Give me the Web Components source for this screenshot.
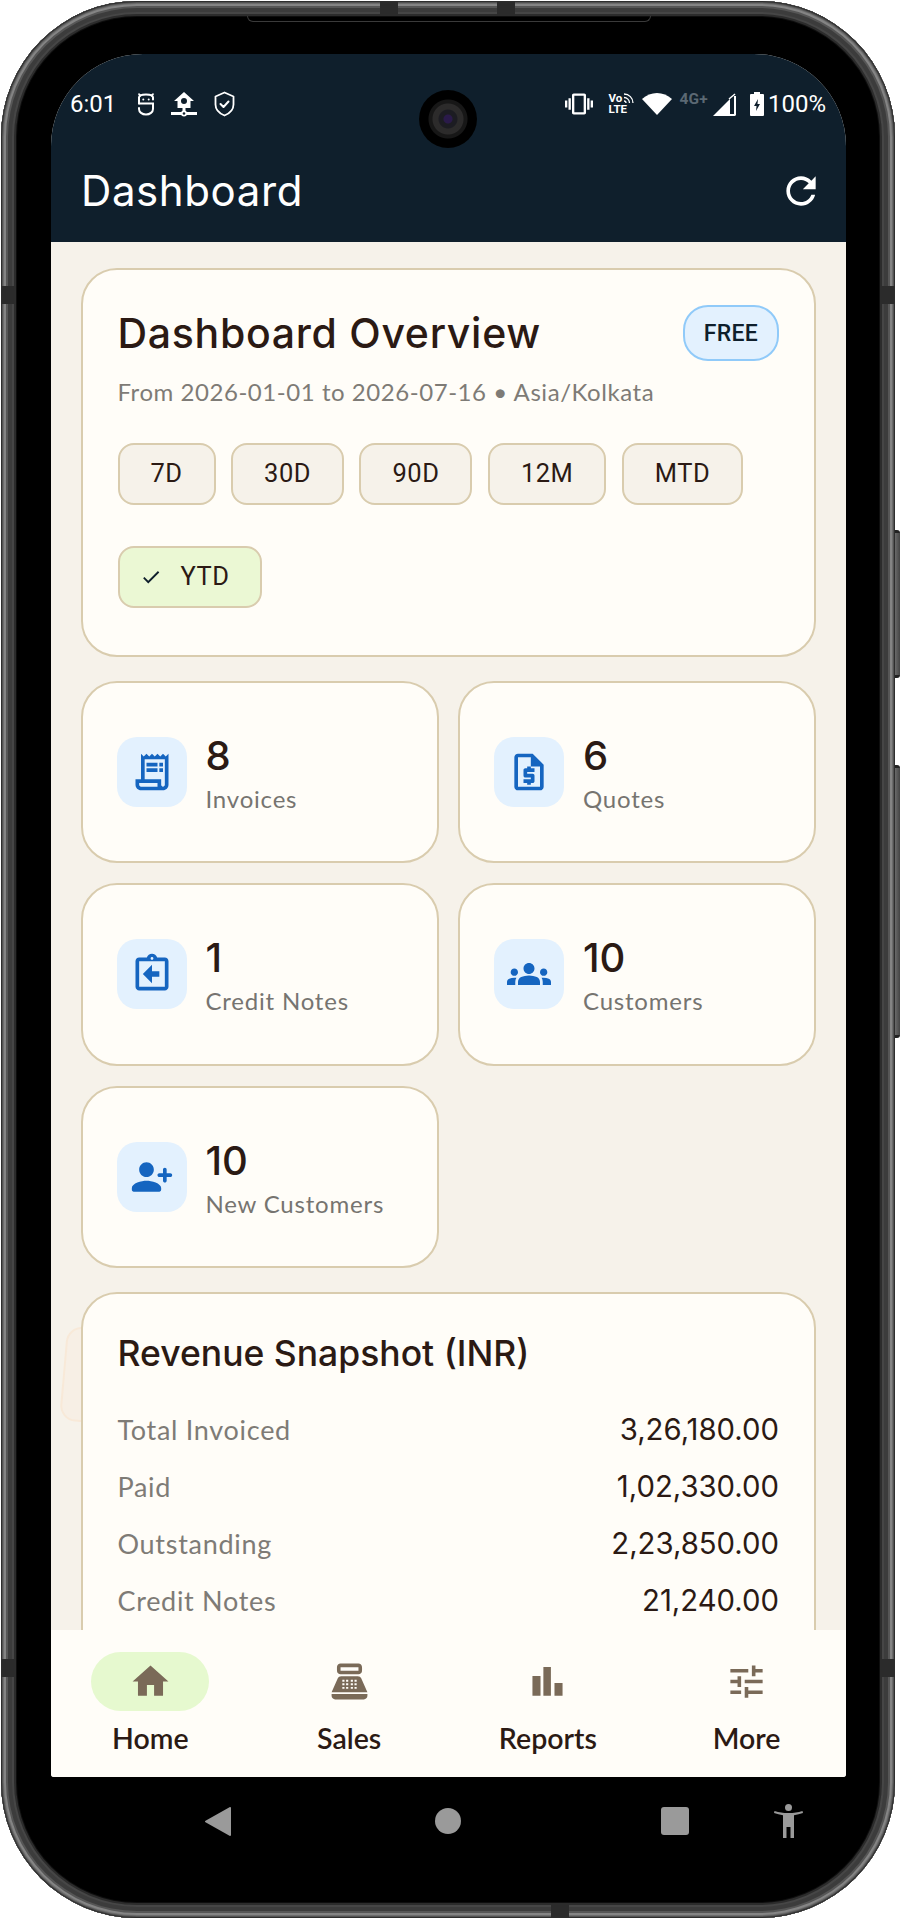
<!DOCTYPE html>
<html lang="en"><head><meta charset="utf-8"><title>Dashboard</title>
<style>html,body{margin:0;padding:0;background:#fff}</style></head>
<body>
<phone-frame>
  <app-screen>
    <app-header slot="header"></app-header>
    <overview-card></overview-card>
    <stat-grid>
      <stat-card icon="invoice" value="8" label="Invoices"></stat-card>
      <stat-card icon="quote" value="6" label="Quotes"></stat-card>
      <stat-card icon="credit" value="1" label="Credit Notes"></stat-card>
      <stat-card icon="groups" value="10" label="Customers"></stat-card>
      <stat-card icon="add" value="10" label="New Customers"></stat-card>
    </stat-grid>
    <revenue-card>
      <revenue-row label="Total Invoiced" value="3,26,180.00"></revenue-row>
      <revenue-row label="Paid" value="1,02,330.00"></revenue-row>
      <revenue-row label="Outstanding" value="2,23,850.00"></revenue-row>
      <revenue-row label="Credit Notes" value="21,240.00"></revenue-row>
    </revenue-card>
    <bottom-nav slot="nav">
      <tab-item icon="home" label="Home" active></tab-item>
      <tab-item icon="sales" label="Sales"></tab-item>
      <tab-item icon="reports" label="Reports"></tab-item>
      <tab-item icon="more" label="More"></tab-item>
    </bottom-nav>
  </app-screen>
  <nav-keys></nav-keys>
</phone-frame>
<script>
const HEAD='Inter,"DejaVu Sans",sans-serif', BODY='Lato,"Open Sans",sans-serif', UI='Roboto,"Noto Sans",sans-serif';
const ICONS={
 invoice:'<path d="M19.5 3.5L18 2l-1.5 1.5L15 2l-1.5 1.5L12 2l-1.5 1.5L9 2 7.5 3.5 6 2v14H3v3c0 1.66 1.34 3 3 3h12c1.66 0 3-1.34 3-3V2l-1.5 1.5zM15 20H6c-.55 0-1-.45-1-1v-1h10v2zm4-1c0 .55-.45 1-1 1s-1-.45-1-1v-3H8V5h11v14z"/><path d="M9 7h6v2H9zm7 0h2v2h-2zm-7 3h6v2H9zm7 0h2v2h-2z"/>',
 quote:'<path d="M14 2H6C4.9 2 4.01 2.9 4.01 4L4 20c0 1.1.89 2 1.99 2H18c1.1 0 2-.9 2-2V8L14 2zM6 20V4h7v5h5v11H6z"/><path d="M11 19h2v-1h1c.55 0 1-.45 1-1v-3c0-.55-.45-1-1-1h-3v-1h4v-2h-2V9h-2v1h-1c-.55 0-1 .45-1 1v3c0 .55.45 1 1 1h3v1H9v2h2v1z"/>',
 credit:'<path d="M19 3h-4.18C14.4 1.84 13.3 1 12 1s-2.4.84-2.82 2H5c-1.1 0-2 .9-2 2v14c0 1.1.9 2 2 2h14c1.1 0 2-.9 2-2V5c0-1.1-.9-2-2-2zm-7-.25c.41 0 .75.34.75.75s-.34.75-.75.75-.75-.34-.75-.75.34-.75.75-.75zM19 19H5V5h14v14z"/><path d="M16 10.5h-4V7l-5 5 5 5v-3.5h4z"/>',
 groups:'<path d="M12 12.75c1.63 0 3.07.39 4.24.9 1.08.48 1.76 1.56 1.76 2.73V18H6v-1.61c0-1.18.68-2.26 1.76-2.73 1.17-.52 2.61-.91 4.24-.91zM4 13c1.1 0 2-.9 2-2s-.9-2-2-2-2 .9-2 2 .9 2 2 2zm1.13 1.1c-.37-.06-.74-.1-1.13-.1-.99 0-1.93.21-2.78.58C.48 14.9 0 15.62 0 16.43V18h4.5v-1.61c0-.83.23-1.61.63-2.29zM20 13c1.1 0 2-.9 2-2s-.9-2-2-2-2 .9-2 2 .9 2 2 2zm4 3.43c0-.81-.48-1.53-1.22-1.85-.85-.37-1.79-.58-2.78-.58-.39 0-.76.04-1.13.1.4.68.63 1.46.63 2.29V18H24v-1.57zM12 6c1.66 0 3 1.34 3 3s-1.34 3-3 3-3-1.34-3-3 1.34-3 3-3z"/>',
 add:'<g transform="translate(24 0) scale(-1 1)"><path d="M15 12c2.21 0 4-1.79 4-4s-1.79-4-4-4-4 1.79-4 4 1.79 4 4 4zm-9-2V8c0-.55-.45-1-1-1s-1 .45-1 1v2H2c-.55 0-1 .45-1 1s.45 1 1 1h2v2c0 .55.45 1 1 1s1-.45 1-1v-2h2c.55 0 1-.45 1-1s-.45-1-1-1H6zm9 4c-2.67 0-8 1.34-8 4v1c0 .55.45 1 1 1h14c.55 0 1-.45 1-1v-1c0-2.66-5.33-4-8-4z"/></g>',
 home:'<path d="M10 20v-6h4v6h5v-8h3L12 3 2 12h3v8z"/>',
 sales:'<path fill-rule="evenodd" d="M17 2H7C5.9 2 5 2.9 5 4v2c0 1.1.9 2 2 2h10c1.1 0 2-.9 2-2V4c0-1.1-.9-2-2-2zm0 4H7V4h10v2zM20 22H4c-1.1 0-2-.9-2-2v-1h20v1c0 1.1-.9 2-2 2zM18.53 10.19C18.21 9.47 17.49 9 16.7 9H7.3c-.79 0-1.51.47-1.83 1.19L2 18h20l-3.47-7.81z"/><g fill="#fffdf8"><path d="M8 11h1.2v1.1H8zm2.1 0h1.2v1.1h-1.2zm2.6 0h1.2v1.1h-1.2zm2.1 0H16v1.1h-1.2zM8 13h1.2v1.1H8zm2.1 0h1.2v1.1h-1.2zm2.6 0h1.2v1.1h-1.2zm2.1 0H16v1.1h-1.2zM8 15h1.2v1.1H8zm2.1 0h1.2v1.1h-1.2zm2.6 0h1.2v1.1h-1.2zm2.1 0H16v1.1h-1.2z"/></g>',
 reports:'<path d="M3.6 8.9h4.5V20H3.6zM9.7 3.9h4.2V20H9.7zM15.9 12.8h4.5V20h-4.5z"/>',
 more:'<path d="M3 17v2h6v-2H3zM3 5v2h10V5H3zm10 16v-2h8v-2h-8v-2h-2v6h2zM7 9v2H3v2h4v2h2V9H7zm14 4v-2H11v2h10zm-6-4h2V7h4V5h-4V3h-2v6z"/>',
 refresh:'<path d="M17.65 6.35C16.2 4.9 14.21 4 12 4c-4.42 0-7.99 3.58-7.99 8s3.57 8 7.99 8c3.73 0 6.84-2.55 7.73-6h-2.08c-.82 2.33-3.04 4-5.65 4-3.31 0-6-2.69-6-6s2.69-6 6-6c1.66 0 3.14.69 4.22 1.78L13 11h7V4l-2.35 2.35z"/>',
 check:'<path d="M9 16.17L4.83 12l-1.41 1.41L9 19 21 7l-1.41-1.41z"/>'
};
function svg(name,size,color){return `<svg xmlns="http://www.w3.org/2000/svg" width="${size}" height="${size}" viewBox="0 0 24 24" fill="${color}" style="display:block;flex:none">${ICONS[name]}</svg>`}
class El extends HTMLElement{
  constructor(){super();this.attachShadow({mode:'open'})}
  connectedCallback(){this.shadowRoot.innerHTML=this.render()}
  a(n){return this.getAttribute(n)||''}
}
const def=(n,r)=>customElements.define(n,class extends El{render(){return r.call(this)}});

def('phone-frame',function(){return `<style>
:host{display:flex;flex-direction:column;box-sizing:border-box;position:relative;width:894px;height:1917px;margin:1px 0 0 1px;padding:53px 49px 0 50px;background:#000;border-radius:136px;
 box-shadow:inset 0 0 0 1px #2e2e2e,inset 0 0 0 2px #525252,inset 0 0 0 3px #6c6c6c,inset 0 0 0 5px #848484,inset 0 0 0 7px #565656,inset 0 0 0 11px #3c3c3c,inset 0 0 0 13px #464646,inset 0 0 0 15px #2c2c2c,inset 0 0 0 16px #0e0e0e}
.btn{position:absolute;left:894px;width:5px;background:linear-gradient(90deg,#6a6a6a,#444);border-radius:0 3px 3px 0;border-top:3px solid #222;border-bottom:3px solid #222;box-sizing:border-box}
.mark{position:absolute;background:#2b2b2b}
.speaker{position:absolute;left:246px;top:15px;width:404px;height:6px;box-sizing:border-box;border:1px solid #3a3a3a;border-top:0;border-radius:0 0 7px 7px}
</style>
<span class="mark" style="left:379px;top:0;width:18px;height:15px"></span>
<span class="mark" style="left:496px;top:0;width:18px;height:15px"></span>
<span class="mark" style="left:550px;bottom:0;width:18px;height:15px"></span>
<span class="mark" style="left:0;top:285px;width:15px;height:18px"></span>
<span class="mark" style="left:0;top:1658px;width:15px;height:18px"></span>
<span class="mark" style="right:0;top:285px;width:15px;height:18px"></span>
<span class="mark" style="right:0;top:1658px;width:15px;height:18px"></span>
<span class="speaker"></span>
<span class="btn" style="top:529px;height:148px"></span>
<span class="btn" style="top:764px;height:273px"></span>
<slot></slot>`});

def('app-screen',function(){return `<style>
:host{display:flex;flex-direction:column;position:relative;width:795px;height:1723px;flex:none;overflow:hidden;border-radius:92px 92px 3px 3px;background:#f6f2ea}
.scroll{flex:1;min-height:0;overflow:hidden;position:relative;display:flex;flex-direction:column;gap:23.5px;padding:26px 30px 0 29.5px}
.ghost{position:absolute;left:12px;top:1086px;width:60px;height:95px;box-sizing:border-box;border:2px solid #f8e9d8;background:#f7efe5;border-radius:16px;transform:rotate(5deg)}
.cam{position:absolute;left:368px;top:36px;width:58px;height:58px;border-radius:50%;background:radial-gradient(circle at 50% 50%,#2a1a4a 0 4px,#1c1c22 5px 9px,#2c2b2b 10px 15px,#171717 16px 19px,#000 20px)}
</style>
<slot name="header"></slot>
<div class="scroll"><div class="ghost"></div><slot></slot></div>
<slot name="nav"></slot>
<div class="cam"></div>`});

def('app-header',function(){return `<style>
:host{display:block;flex:none;height:188px;box-sizing:border-box;background:#0f1f2c;color:#fff;padding-top:36px}
.st{display:flex;align-items:center;justify-content:space-between;height:28px;padding:0 20px 0 19px;font:400 24px/28px ${UI}}
.g{display:flex;align-items:center}
svg{display:block;flex:none}
.volte{display:flex;flex-direction:column;font:700 11.5px/11px ${UI};position:relative;width:26px;height:22px;margin-left:15px}
.four{font:700 15.5px/14px ${UI};color:#5b6873;margin:-11px 0 0 7px;letter-spacing:.2px}
.bar{display:flex;align-items:center;justify-content:space-between;height:90px;margin-top:28px;padding:0 7px 0 30px}
h1{margin:0;font:400 42px/44px ${HEAD};letter-spacing:.6px}
</style>
<div class="st">
 <div class="g"><span>6:01</span>
  <svg style="margin-left:21px" width="18" height="24" viewBox="0 0 18 24" fill="none" stroke="#fff" stroke-width="2" stroke-linecap="round"><path d="M2 11.5V5.5C2 3.5 4.5 2.5 9 2.5s7 1 7 3v2"/><path d="M2 11.5h14v5.500c0 3-3 5.500-7 5.500s-7-2.500-7-5.500v-1"/><path d="M2 2.200l1.500 1.500M16 2.200l-1.500 1.500" stroke-width="1.800"/><circle cx="6.300" cy="7.500" r="1" fill="#fff" stroke="none"/><circle cx="11.700" cy="7.500" r="1" fill="#fff" stroke="none"/></svg>
  <svg style="margin-left:15px" width="28" height="26" viewBox="0 0 28 26" fill="#fff"><path fill-rule="evenodd" d="M14 1L24 10h-3.500v7h-13v-7H4zM14 7a3 3 0 1 0 0 6 3 3 0 0 0 0-6z"/><path d="M12.500 17h3v3h-3z"/><rect x="1" y="21" width="26" height="3"/><circle cx="14" cy="22.500" r="3"/><circle cx="14" cy="22.500" r="1.300" fill="#0f1f2c"/></svg>
  <svg style="margin-left:16px" width="21" height="26" viewBox="0 0 21 26" fill="none" stroke="#fff" stroke-width="1.800"><path d="M10.500 1.500L19.500 5.500v8c0 5-4 9-9 11-5-2-9-6-9-11v-8z" stroke-linejoin="round"/><path d="M6.500 13l3 3 5-5.500" stroke-width="2" stroke-linecap="round" stroke-linejoin="round"/></svg>
 </div>
 <div class="g">
  <svg width="28" height="28" viewBox="0 0 24 24" fill="#fff"><path d="M0 15h2V9H0v6zm3 2h2V7H3v10zm19-8v6h2V9h-2zm-3 8h2V7h-2v10zM16.500 3h-9C6.670 3 6 3.670 6 4.500v15c0 .83.67 1.500 1.500 1.500h9c.83 0 1.500-.67 1.500-1.500v-15c0-.83-.67-1.500-1.500-1.500zM16 19H8V5h8v14z"/></svg>
  <div class="volte"><span>Vo</span><span>LTE</span><svg style="position:absolute;right:0;top:0" width="11" height="11" viewBox="0 0 11 11" fill="none" stroke="#fff" stroke-width="1.300"><path d="M1 1c5 0 9 4 9 9M1 4.500c3 0 5.500 2.500 5.500 5.500M1 8c1 0 2 1 2 2"/></svg></div>
  <svg style="margin-left:8px" width="30" height="24" viewBox="0 0 28 24" fill="#fff" preserveAspectRatio="none"><path d="M0 7C4 3 9 1 14 1s10 2 14 6L14 23z"/></svg>
  <span class="four">4G+</span>
  <svg style="margin-left:5px" width="23" height="23" viewBox="0 0 23 23"><path d="M0 23L17 6v17z" fill="#fff"/><path d="M22 3v19.500" stroke="#fff" stroke-width="2"/><path d="M17 22h5" stroke="#fff" stroke-width="2"/><path d="M16 6L22 1" stroke="#fff" stroke-width="1.500"/></svg>
  <svg style="margin-left:14px" width="14" height="24" viewBox="0 0 14 24"><path fill="#fff" d="M4 0h6v2h3a1 1 0 0 1 1 1v20a1 1 0 0 1-1 1H1a1 1 0 0 1-1-1V3a1 1 0 0 1 1-1h3z"/><path fill="#0f1f2c" d="M8 7L4 14h2.500L6 19l4-7H7.500z"/></svg>
  <span style="margin-left:4px">100%</span>
 </div>
</div>
<div class="bar"><h1>Dashboard</h1><div style="width:44px;height:44px;margin-right:16px">${svg('refresh',44,'#fff')}</div></div>`});

def('overview-card',function(){const chips=['7D','30D','90D','12M','MTD'];return `<style>
:host{display:block;flex:none;position:relative;box-sizing:border-box;height:389px;background:#fffdf8;border:2px solid #d9ccae;border-radius:36px;padding:35px}
.top{display:flex;justify-content:space-between;align-items:center;height:56px}
h2{margin:0;font:500 41px/44px ${HEAD};color:#2b1a14;letter-spacing:.7px;white-space:nowrap}
.free{box-sizing:border-box;height:56px;width:96px;flex:none;display:flex;align-items:center;justify-content:center;border:2px solid #90caf9;background:#e3f1fe;border-radius:25px;font:500 23px/1 ${UI};color:#0f1f2c;letter-spacing:.3px}
p{margin:14px 0 0;font:400 24px/34px ${BODY};color:#7e7b76;letter-spacing:.55px}
.chips{display:flex;flex-wrap:wrap;gap:41px 15.5px;margin-top:34px}
.c{box-sizing:border-box;height:62px;display:flex;align-items:center;padding:0 31px;border:2px solid #d9ccae;border-radius:16px;background:#f6f2ea;font:400 25.5px/1 ${UI};color:#2b1a14;letter-spacing:.5px}
.c.on{background:#ebf8d4;padding:0 31px 0 20px}
.c.on svg{margin-right:19px}
</style>
<div class="top"><h2>Dashboard Overview</h2><span class="free">FREE</span></div>
<p>From 2026-01-01 to 2026-07-16 • Asia/Kolkata</p>
<div class="chips">${chips.map(c=>`<span class="c">${c}</span>`).join('')}<span class="c on">${svg('check',22,'#0f1f2c')}YTD</span></div>`});

def('stat-grid',function(){return `<style>:host{display:grid;flex:none;grid-template-columns:1fr 1fr;gap:20px 19.5px}</style><slot></slot>`});

def('stat-card',function(){return `<style>
:host{display:flex;align-items:center;gap:19px;box-sizing:border-box;height:182.5px;background:#fffdf8;border:2px solid #d9ccae;border-radius:36px;padding:0 34px}
.i{width:70px;height:70px;flex:none;border-radius:20px;background:#e3f1fe;display:flex;align-items:center;justify-content:center}
.t{display:flex;flex-direction:column;margin-top:6px}
b{font:500 40px/44px ${HEAD};color:#2b1a14}
span{font:400 24px/34px ${BODY};color:#767470;letter-spacing:.8px;margin-top:4px;white-space:nowrap}
</style><div class="i">${svg(this.a('icon'),44,'#1565c0')}</div><div class="t"><b>${this.a('value')}</b><span>${this.a('label')}</span></div>`});

def('revenue-card',function(){return `<style>
:host{display:block;flex:none;position:relative;box-sizing:border-box;background:#fffdf8;border:2px solid #d9ccae;border-radius:36px;padding:38px 35px 120px}
h3{margin:0 0 26px;font:500 35.5px/44px ${HEAD};color:#2b1a14;white-space:nowrap}
</style><h3>Revenue Snapshot (INR)</h3><slot></slot>`});

def('revenue-row',function(){return `<style>
:host{display:flex;justify-content:space-between;align-items:center;height:57px}
span{font:400 27px/34px ${BODY};color:#7e7b76;letter-spacing:.7px}
b{font:400 29.3px/34px ${HEAD};color:#2b1a14}
</style><span>${this.a('label')}</span><b>${this.a('value')}</b>`});

def('bottom-nav',function(){return `<style>:host{display:grid;flex:none;grid-template-columns:repeat(4,1fr);height:147px;background:#fffdf8;padding-top:22px;box-sizing:border-box;z-index:1}</style><slot></slot>`});

def('tab-item',function(){const on=this.hasAttribute('active');return `<style>
:host{display:flex;flex-direction:column;align-items:center}
.p{width:118px;height:59px;border-radius:30px;display:flex;align-items:center;justify-content:center;${on?'background:#e6f9cf;':''}}
span{font:600 28.5px/34px ${BODY};color:#2b1a14;margin-top:10px}
</style><div class="p">${svg(this.a('icon'),43,'#7a6a58')}</div><span>${this.a('label')}</span>`});

def('nav-keys',function(){return `<style>
:host{display:flex;align-items:center;height:88px;flex:none;width:795px}
svg{display:block;flex:none}
</style>
<svg style="margin-left:154px" width="26" height="29" viewBox="0 0 26 29"><path fill="#9a9a9a" stroke="#9a9a9a" stroke-width="2" stroke-linejoin="round" d="M1 14.500L25 1v27z"/></svg>
<svg style="margin-left:204px" width="26" height="26" viewBox="0 0 26 26"><circle cx="13" cy="13" r="13" fill="#9a9a9a"/></svg>
<svg style="margin-left:200px" width="28" height="28" viewBox="0 0 28 28"><rect width="28" height="28" rx="3" fill="#9a9a9a"/></svg>
<svg style="margin-left:85px" width="29" height="34" viewBox="0 0 29 34" fill="#9a9a9a"><circle cx="14.500" cy="3.500" r="3.500"/><path d="M0 9l.5-2c5 1.500 8 2 14 2s9-.5 14-2l.5 2c-3 1-6 1.800-9 2.200V34h-3.500V23h-4v11H9V11.200C6 10.800 3 10 0 9z"/></svg>`});
</script>
</body></html>
